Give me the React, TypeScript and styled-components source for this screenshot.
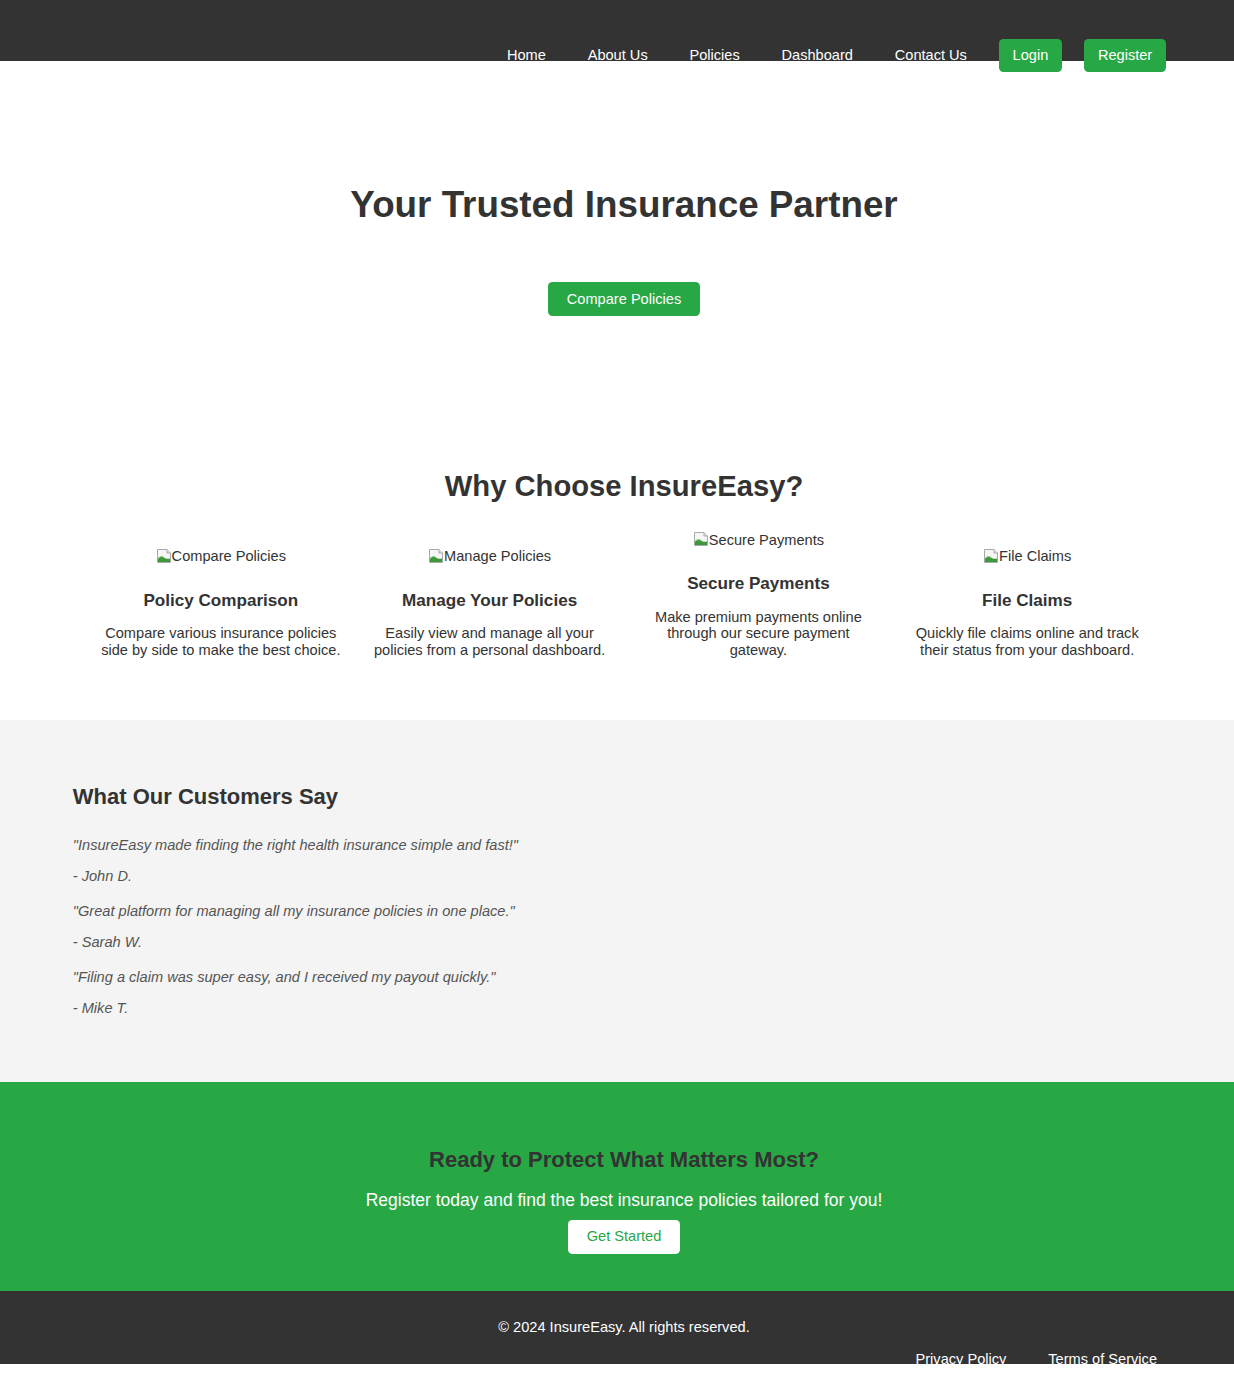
import React from "react";
import styled, { createGlobalStyle } from "styled-components";

const GlobalStyle = createGlobalStyle`
  html, body {
    margin: 0;
    padding: 0;
    background: #ffffff;
    overflow-x: hidden;
  }
  body {
    font-family: "Liberation Sans", Arial, Helvetica, sans-serif;
    font-size: 14.6px;
    color: #333333;
  }
  * { box-sizing: border-box; }
`;

const GREEN = "#28a745";

const Page = styled.div`
  width: calc(100% + 14px);
`;

/* ---------- Header ---------- */
const Header = styled.header`
  background: #333333;
  height: 61px;
  display: flex;
  justify-content: flex-end;
  align-items: flex-start;
  padding: 39px 71px 0 0;
`;

const NavList = styled.ul`
  list-style: none;
  margin: 0;
  padding: 0;
  display: flex;
  align-items: center;
  height: 33px;
`;

const NavItem = styled.li`
  margin: 0 10.9px;
  display: flex;
  align-items: center;
`;

const NavLink = styled.a`
  color: #ffffff;
  text-decoration: underline;
  padding: 0 10px;
  line-height: 16.8px;
`;

const NavButton = styled.a`
  display: inline-block;
  background: ${GREEN};
  color: #ffffff;
  text-decoration: none;
  padding: 8.1px 13.9px;
  border-radius: 4.5px;
  line-height: 16.8px;
`;

/* ---------- Hero ---------- */
const Hero = styled.section`
  display: flex;
  flex-direction: column;
  align-items: center;
  padding: 123px 0 84px;
`;

const HeroTitle = styled.h1`
  margin: 0 0 56px;
  font-size: 36.8px;
  font-weight: bold;
  line-height: 42px;
  color: #333333;
`;

const PrimaryButton = styled.a`
  display: inline-block;
  background: ${GREEN};
  color: #ffffff;
  text-decoration: none;
  padding: 8.6px 18.8px;
  border-radius: 4.5px;
  line-height: 16.8px;
`;

/* ---------- Features ---------- */
const Features = styled.section`
  padding: 70.2px 0 60.6px;
  display: flex;
  flex-direction: column;
  align-items: center;
`;

const SectionTitle = styled.h2`
  margin: 0;
  font-size: 29.2px;
  line-height: 33.5px;
  font-weight: bold;
  color: #333333;
`;

const FeatureRow = styled.div`
  margin-top: 27.9px;
  width: 1075.2px;
  display: flex;
  align-items: flex-end;
`;

const FeatureCard = styled.div`
  flex: 1;
  padding: 0 13.5px;
  display: flex;
  flex-direction: column;
  align-items: center;
  text-align: center;
`;

const BrokenImage = styled.span`
  display: inline-flex;
  align-items: center;
  height: 16.8px;
  line-height: 16.8px;
  color: #333333;
  svg {
    flex: none;
    margin-top: -1px;
  }
`;

const FeatureTitle = styled.h3`
  margin: 25.8px 0 0;
  font-size: 17.1px;
  line-height: 19.7px;
  font-weight: bold;
  color: #333333;
`;

const FeatureText = styled.p`
  margin: 14.8px 0 0;
  line-height: 16.8px;
  color: #333333;
`;

/* ---------- Testimonials ---------- */
const Testimonials = styled.section`
  background: #f4f4f4;
  padding: 64.4px 72.8px 64.6px;
`;

const TestimonialsTitle = styled.h2`
  margin: 0 0 27.9px;
  font-size: 22px;
  line-height: 25.3px;
  font-weight: bold;
  color: #333333;
`;

const Testimonial = styled.div`
  & + & {
    margin-top: 18.2px;
  }
`;

const Quote = styled.p`
  margin: 0;
  font-style: italic;
  line-height: 16.8px;
  color: #555555;
`;

const Author = styled(Quote)`
  margin-top: 14.2px;
`;

/* ---------- CTA ---------- */
const Cta = styled.section`
  background: ${GREEN};
  padding: 65px 0 37px;
  display: flex;
  flex-direction: column;
  align-items: center;
  text-align: center;
`;

const CtaTitle = styled.h2`
  margin: 0;
  font-size: 22px;
  line-height: 25.3px;
  font-weight: bold;
  color: #333333;
`;

const CtaText = styled.p`
  margin: 18.5px 0 0;
  font-size: 17.5px;
  line-height: 20.1px;
  color: #ffffff;
`;

const LightButton = styled.a`
  display: inline-block;
  margin-top: 9.5px;
  background: #ffffff;
  color: ${GREEN};
  text-decoration: none;
  padding: 8.4px 18.7px;
  border-radius: 4.5px;
  line-height: 16.8px;
`;

/* ---------- Footer ---------- */
const Footer = styled.footer`
  background: #333333;
  height: 73px;
  padding-top: 28.7px;
  display: flex;
  flex-direction: column;
`;

const Copyright = styled.p`
  margin: 0;
  text-align: center;
  line-height: 16.8px;
  color: #ffffff;
`;

const FooterLinks = styled.div`
  margin-top: 15.5px;
  display: flex;
  justify-content: flex-end;
  gap: 42px;
  padding-right: 91px;
`;

const FooterLink = styled.a`
  color: #ffffff;
  text-decoration: underline;
  line-height: 16.8px;
`;

const BrokenIcon = () => (
  <svg width="16" height="16" viewBox="0 0 16 16" aria-hidden="true">
    <path d="M1.5 1.5 H11 L14.5 5 V14.5 H1.5 Z" fill="#f6f6f6" stroke="#a9a9a9" strokeWidth="1" />
    <path d="M11 1.5 V5 H14.5" fill="#e4e4e4" stroke="#a9a9a9" strokeWidth="1" />
    <path d="M2 14 L2 10.5 C4 8.5 6 8 8 9.5 C9.5 10.6 11 11 14 10.5 L14 14 Z" fill="#3c9a3a" />
    <path d="M2 10.5 C4 8.5 6 8 8 9.5" fill="none" stroke="#7cc36f" strokeWidth="1" />
  </svg>
);

const navLinks = ["Home", "About Us", "Policies", "Dashboard", "Contact Us"];

const features = [
  {
    alt: "Compare Policies",
    title: "Policy Comparison",
    text: "Compare various insurance policies side by side to make the best choice.",
  },
  {
    alt: "Manage Policies",
    title: "Manage Your Policies",
    text: "Easily view and manage all your policies from a personal dashboard.",
  },
  {
    alt: "Secure Payments",
    title: "Secure Payments",
    text: "Make premium payments online through our secure payment gateway.",
  },
  {
    alt: "File Claims",
    title: "File Claims",
    text: "Quickly file claims online and track their status from your dashboard.",
  },
];

const testimonials = [
  { quote: "\"InsureEasy made finding the right health insurance simple and fast!\"", author: "- John D." },
  { quote: "\"Great platform for managing all my insurance policies in one place.\"", author: "- Sarah W." },
  { quote: "\"Filing a claim was super easy, and I received my payout quickly.\"", author: "- Mike T." },
];

export default function App() {
  return (
    <Page>
      <GlobalStyle />
      <Header>
        <nav>
          <NavList>
            {navLinks.map((l) => (
              <NavItem key={l}>
                <NavLink href="#">{l}</NavLink>
              </NavItem>
            ))}
            <NavItem>
              <NavButton href="#">Login</NavButton>
            </NavItem>
            <NavItem>
              <NavButton href="#">Register</NavButton>
            </NavItem>
          </NavList>
        </nav>
      </Header>

      <Hero>
        <HeroTitle>Your Trusted Insurance Partner</HeroTitle>
        <PrimaryButton href="#">Compare Policies</PrimaryButton>
      </Hero>

      <Features>
        <SectionTitle>Why Choose InsureEasy?</SectionTitle>
        <FeatureRow>
          {features.map((f) => (
            <FeatureCard key={f.title}>
              <BrokenImage role="img" aria-label={f.alt}>
                <BrokenIcon />
                {f.alt}
              </BrokenImage>
              <FeatureTitle>{f.title}</FeatureTitle>
              <FeatureText>{f.text}</FeatureText>
            </FeatureCard>
          ))}
        </FeatureRow>
      </Features>

      <Testimonials>
        <TestimonialsTitle>What Our Customers Say</TestimonialsTitle>
        {testimonials.map((t) => (
          <Testimonial key={t.author}>
            <Quote>{t.quote}</Quote>
            <Author>{t.author}</Author>
          </Testimonial>
        ))}
      </Testimonials>

      <Cta>
        <CtaTitle>Ready to Protect What Matters Most?</CtaTitle>
        <CtaText>Register today and find the best insurance policies tailored for you!</CtaText>
        <LightButton href="#">Get Started</LightButton>
      </Cta>

      <Footer>
        <Copyright>© 2024 InsureEasy. All rights reserved.</Copyright>
        <FooterLinks>
          <FooterLink href="#">Privacy Policy</FooterLink>
          <FooterLink href="#">Terms of Service</FooterLink>
        </FooterLinks>
      </Footer>
    </Page>
  );
}
